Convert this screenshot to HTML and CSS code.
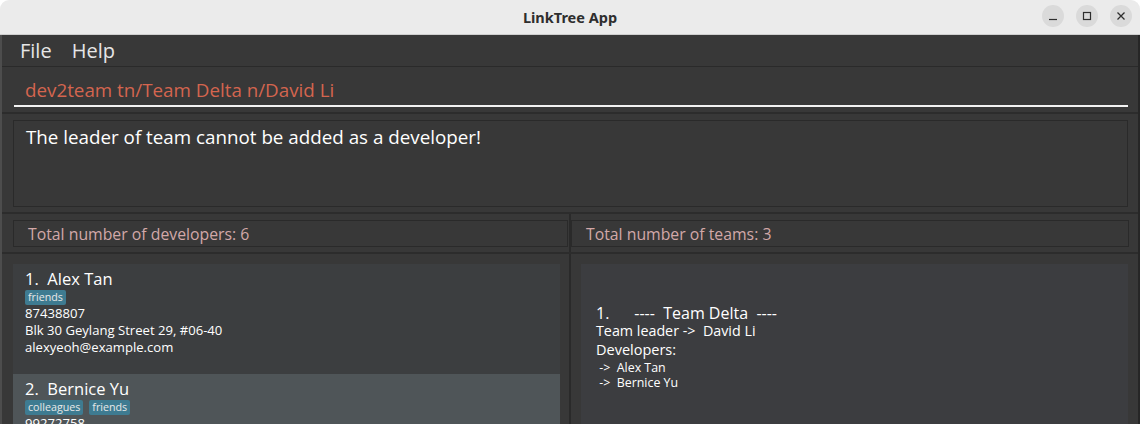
FILE: index.html
```html
<!DOCTYPE html>
<html>
<head>
<meta charset="utf-8">
<title>LinkTree App</title>
<link rel="stylesheet" href="styles.css">
</head>
<body>
<div class="window">
  <header class="titlebar">
    <span class="title">LinkTree App</span>
    <div class="controls">
      <span class="ctl"><svg width="12" height="12" viewBox="0 0 12 12"><path d="M2 9.5h8" stroke="#2e2e2e" stroke-width="1.2"/></svg></span>
      <span class="ctl"><svg width="12" height="12" viewBox="0 0 12 12"><rect x="2.5" y="2.5" width="7" height="7" fill="none" stroke="#2e2e2e" stroke-width="1.2"/></svg></span>
      <span class="ctl"><svg width="12" height="12" viewBox="0 0 12 12"><path d="M2.5 2.5l7 7M9.5 2.5l-7 7" stroke="#2e2e2e" stroke-width="1.3"/></svg></span>
    </div>
  </header>
  <main class="app">
    <nav class="menubar">
      <span class="menu">File</span>
      <span class="menu">Help</span>
    </nav>
    <section class="command">
      <div class="cmd-field">dev2team tn/Team Delta n/David Li</div>
    </section>
    <section class="result">
      <div class="result-box">The leader of team cannot be added as a developer!</div>
    </section>
    <section class="status">
      <div class="status-cell left"><div class="status-box">Total number of developers: 6</div></div>
      <div class="divider"></div>
      <div class="status-cell right"><div class="status-box">Total number of teams: 3</div></div>
    </section>
    <section class="lists">
      <div class="pane left">
        <div class="card">
          <div class="name">1.&nbsp; Alex Tan</div>
          <div class="tags"><span class="tag">friends</span></div>
          <div class="line">87438807</div>
          <div class="line">Blk 30 Geylang Street 29, #06-40</div>
          <div class="line">alexyeoh@example.com</div>
        </div>
        <div class="card alt">
          <div class="name">2.&nbsp; Bernice Yu</div>
          <div class="tags"><span class="tag">colleagues</span><span class="tag">friends</span></div>
          <div class="line">99272758</div>
        </div>
      </div>
      <div class="divider"></div>
      <div class="pane right">
        <div class="team-card">
          <div class="team-name">1.&nbsp;&nbsp;&nbsp;&nbsp;&nbsp; ----&nbsp; Team Delta&nbsp; ----</div>
          <div class="team-leader">Team leader -&gt;&nbsp; David Li</div>
          <div class="team-devs">Developers:</div>
          <div class="team-dev">&nbsp;-&gt;&nbsp; Alex Tan</div>
          <div class="team-dev">&nbsp;-&gt;&nbsp; Bernice Yu</div>
        </div>
      </div>
    </section>
  </main>
</div>
</body>
</html>
```

FILE: styles.css
```css
* { box-sizing: border-box; }
html, body {
  margin: 0;
  padding: 0;
  width: 1140px;
  height: 424px;
  overflow: hidden;
  background: #ffffff;
  font-family: "Open Sans", "Noto Sans", sans-serif;
}
.window {
  width: 1140px;
  height: 424px;
  display: flex;
  flex-direction: column;
}
.titlebar {
  height: 35px;
  flex: none;
  background: #ebebeb;
  border-radius: 9px 9px 0 0;
  border-bottom: 1px solid #cfcfcf;
  display: flex;
  align-items: center;
  justify-content: center;
  position: relative;
}
.title {
  font-family: "Noto Sans", "Open Sans", sans-serif;
  font-weight: 700;
  font-size: 14.5px;
  color: #2e2e2e;
}
.controls {
  position: absolute;
  right: 8px;
  top: 5px;
  display: flex;
  gap: 12px;
}
.ctl {
  width: 22px;
  height: 22px;
  border-radius: 50%;
  background: #dadada;
  display: flex;
  align-items: center;
  justify-content: center;
}
.app {
  flex: 1;
  background: #383838;
  border-left: 2px solid #4d4d4d;
  border-right: 2px solid #262626;
  display: flex;
  flex-direction: column;
  min-height: 0;
}
.menubar {
  height: 32px;
  flex: none;
  display: flex;
  align-items: center;
  padding-left: 18px;
  gap: 20px;
  border-bottom: 1px solid #2a2a2a;
}
.menu {
  font-size: 20px;
  color: #e6e6e6;
}
.command {
  height: 47px;
  flex: none;
  padding: 9px 10px 0 12px;
  border-bottom: 2px solid #2c2c2c;
}
.cmd-field {
  height: 31px;
  padding-left: 11px;
  font-size: 18.8px;
  line-height: 28px;
  color: #d4654f;
  border-bottom: 2px solid #f2f2f2;
}
.result {
  height: 100px;
  flex: none;
  padding: 6px 10px 5px 11px;
  border-bottom: 2px solid #2c2c2c;
}
.result-box {
  height: 100%;
  border: 1px solid #2a2a2a;
  padding: 3px 12px;
  font-size: 18.8px;
  line-height: 26px;
  color: #ffffff;
}
.status {
  height: 40px;
  flex: none;
  display: flex;
  border-bottom: 2px solid #2c2c2c;
}
.divider {
  width: 2px;
  flex: none;
  background: #2a2a2a;
}
.status-cell {
  padding: 6px 0 5px 0;
}
.status-cell.left {
  width: 567px;
  padding-left: 11px;
  padding-right: 1px;
}
.status-cell.right {
  flex: 1;
  padding-left: 0;
  padding-right: 9px;
}
.status-box {
  height: 100%;
  border: 1px solid #2a2a2a;
  padding-left: 14px;
  font-size: 15.8px;
  line-height: 26px;
  color: #d2a8a8;
}
.lists {
  flex: 1;
  display: flex;
  min-height: 0;
}
.pane {
  padding-top: 10px;
  overflow: hidden;
}
.pane.left {
  width: 567px;
  padding-left: 11px;
  padding-right: 9px;
}
.pane.right {
  flex: 1;
  padding-left: 10px;
  padding-right: 10px;
}
.card {
  background: #3c3e40;
  height: 110px;
  padding: 4px 12px;
  color: #ffffff;
}
.card.alt {
  background: #4f5558;
}
.name {
  font-size: 16.5px;
  line-height: 22px;
}
.tags {
  display: flex;
  gap: 6px;
  margin: 0 0 0;
}
.tag {
  background: #3e7b91;
  color: #e8e8e8;
  font-size: 10.7px;
  line-height: 15px;
  padding: 0 3px;
  border-radius: 2px;
}
.line {
  font-size: 13.1px;
  line-height: 17px;
  color: #ffffff;
}
.team-card {
  background: #3c3d40;
  height: 200px;
  padding: 39px 15px;
  color: #ffffff;
}
.team-name {
  font-size: 16px;
  line-height: 20px;
}
.team-leader {
  font-size: 14.3px;
  line-height: 16px;
}
.team-devs {
  font-size: 14.5px;
  line-height: 21px;
}
.team-dev {
  font-size: 12.4px;
  line-height: 15px;
}
```
